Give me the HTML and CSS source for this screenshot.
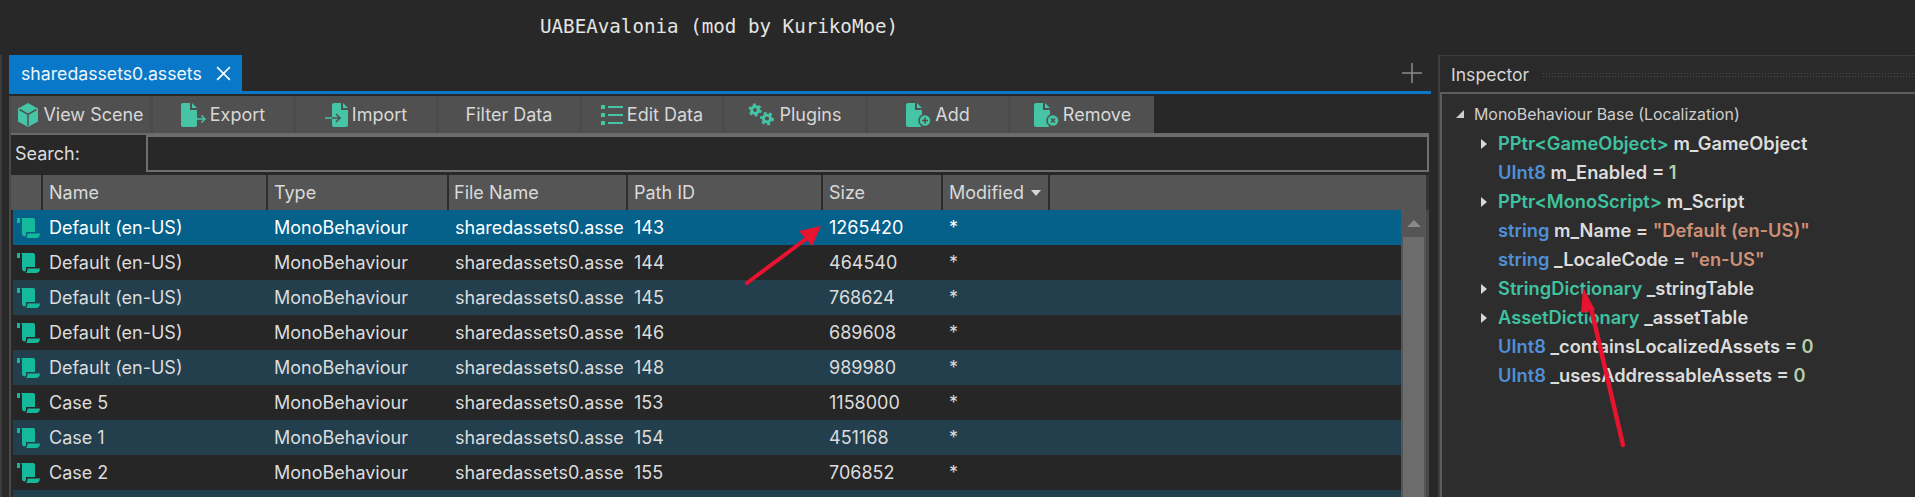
FILE: index.html
```html
<!DOCTYPE html>
<html lang="en">
<head>
  <meta charset="UTF-8">
  <meta name="viewport" content="width=device-width, initial-scale=1.0">
  <title>UABEAvalonia</title>
  <link rel="stylesheet" href="styles.css">
</head>
<body>
  <svg class="defs" width="0" height="0">
    <symbol id="scroll" viewBox="0 0 24 20">
      <path d="M1 0h3v5H1z M6 0h11a2 2 0 0 1 2 2v12h-9v3a1.500 1.500 0 0 1-1 1.400 3 3 0 0 1-3-3V2.500A3 3 0 0 0 5 0z"/>
      <path d="M11.500 15.500H24c0 2.500-1.500 4.500-4 4.500H10c1-1 1.500-2.500 1.500-4.500z"/>
    </symbol>
    <symbol id="file" viewBox="0 0 16 24">
      <path d="M2 0h7v7h7v15a2 2 0 0 1-2 2H2a2 2 0 0 1-2-2V2a2 2 0 0 1 2-2z"/>
      <path d="M11 0l5 5h-5z"/>
    </symbol>
  </svg>

  <header class="titlebar">UABEAvalonia (mod by KurikoMoe)</header>

  <div class="workspace">
    <section class="docs">
      <div class="tabstrip">
        <div class="tab">
          <span>sharedassets0.assets</span>
          <svg class="tab-close" viewBox="0 0 16 16"><path d="M2 2l12 12M14 2L2 14"/></svg>
        </div>
        <svg class="tab-add" viewBox="0 0 20 20"><path d="M10 0v20M0 10h20"/></svg>
      </div>
      <div class="tabline"></div>

      <div class="panel">
        <div class="toolbar">
          <button class="tool">
            <svg class="ico" width="22" height="24" viewBox="0 0 22 24"><path d="M11 0l10 5.500v13L11 24 1 18.500v-13z"/><path class="cut" d="M2.500 6.500l8.500 5 8.500-5M11 11.500V23"/></svg>
            View Scene
          </button>
          <button class="tool">
            <svg class="ico" width="25" height="24" viewBox="0 0 25 24"><use href="#file" width="16" height="24"/><path class="arrow" d="M15 16h9M20.500 12.500l3.500 3.500-3.500 3.500"/></svg>
            Export
          </button>
          <button class="tool">
            <svg class="ico" width="23" height="24" viewBox="0 0 23 24"><path class="arrow" d="M0 15h7"/><use href="#file" x="7" width="16" height="24"/><path class="arrow-cut" d="M7 15h8M11 11l4 4-4 4"/></svg>
            Import
          </button>
          <button class="tool">Filter Data</button>
          <button class="tool">
            <svg class="ico" width="22" height="22" viewBox="0 0 22 22"><path d="M0 1h4v4H0zM7 2h15v2H7zM0 9h4v4H0zM7 10h15v2H7zM0 17h4v4H0zM7 18h15v2H7z"/></svg>
            Edit Data
          </button>
          <button class="tool">
            <svg class="ico" width="27" height="24" viewBox="0 0 27 24">
              <circle class="gear" cx="7" cy="7" r="3.400"/><circle class="teeth" cx="7" cy="7" r="5.500"/>
              <circle class="gear" cx="19" cy="15.500" r="3.600"/><circle class="teeth" cx="19" cy="15.500" r="5.800"/>
            </svg>
            Plugins
          </button>
          <button class="tool">
            <svg class="ico" width="25" height="24" viewBox="0 0 25 24"><use href="#file" width="16" height="24"/><circle class="badge" cx="19" cy="17.500" r="6"/><path class="mark" d="M19 14.500v6M16 17.500h6"/></svg>
            Add
          </button>
          <button class="tool">
            <svg class="ico" width="25" height="24" viewBox="0 0 25 24"><use href="#file" width="16" height="24"/><circle class="badge" cx="19" cy="17.500" r="6"/><path class="mark" d="M17 15.500l4 4M21 15.500l-4 4"/></svg>
            Remove
          </button>
        </div>

        <div class="search">
          <label class="search-label" for="search">Search:</label>
          <input id="search" class="search-input" type="text">
        </div>

        <div class="table-head">
          <div class="th th-icon"></div>
          <div class="th th-name">Name</div>
          <div class="th th-type">Type</div>
          <div class="th th-file">File Name</div>
          <div class="th th-path">Path ID</div>
          <div class="th th-size">Size</div>
          <div class="th th-mod">Modified <i class="sort"></i></div>
        </div>

        <div class="table-body">
          <div class="rows" id="rows"></div>
          <div class="scrollbar">
            <div class="scroll-up"><i></i></div>
            <div class="scroll-thumb"></div>
          </div>
        </div>
      </div>
    </section>

    <section class="inspector">
      <div class="inspector-head">
        <span>Inspector</span>
        <div class="grip"></div>
      </div>
      <div class="tree">
        <div class="node root"><i class="open"></i>MonoBehaviour Base (Localization)</div>
        <div class="node"><i class="closed"></i><b class="cls">PPtr&lt;GameObject&gt;</b> m_GameObject</div>
        <div class="node"><b class="prim">UInt8</b> m_Enabled = <b class="num">1</b></div>
        <div class="node"><i class="closed"></i><b class="cls">PPtr&lt;MonoScript&gt;</b> m_Script</div>
        <div class="node"><b class="prim">string</b> m_Name = <b class="str">"Default (en-US)"</b></div>
        <div class="node"><b class="prim">string</b> _LocaleCode = <b class="str">"en-US"</b></div>
        <div class="node"><i class="closed"></i><b class="cls">StringDictionary</b> _stringTable</div>
        <div class="node"><i class="closed"></i><b class="cls">AssetDictionary</b> _assetTable</div>
        <div class="node"><b class="prim">UInt8</b> _containsLocalizedAssets = <b class="num">0</b></div>
        <div class="node"><b class="prim">UInt8</b> _usesAddressableAssets = <b class="num">0</b></div>
      </div>
    </section>
  </div>

  <svg class="markup" width="1915" height="497" viewBox="0 0 1915 497">
    <path d="M747 283L806 239" stroke="#e8132e" stroke-width="4" stroke-linecap="round"/>
    <path d="M821 226L812 246 799 231z" fill="#e8132e"/>
    <path d="M1623 445L1591 308" stroke="#e8132e" stroke-width="4.500" stroke-linecap="round"/>
    <path d="M1583 287L1595 310 1581 313z" fill="#e8132e"/>
  </svg>

  <script>
    const assets = [
      ['Default (en-US)', 143, 1265420],
      ['Default (en-US)', 144, 464540],
      ['Default (en-US)', 145, 768624],
      ['Default (en-US)', 146, 689608],
      ['Default (en-US)', 148, 989980],
      ['Case 5', 153, 1158000],
      ['Case 1', 154, 451168],
      ['Case 2', 155, 706852],
      ['', '', '']
    ];

    const rows = document.getElementById('rows');
    assets.forEach((asset, index) => {
      const row = document.createElement('div');
      row.className = 'row' + (index === 0 ? ' selected' : '') + (index % 2 === 0 && index > 0 ? ' striped' : '');
      const filled = asset[0] !== '';
      row.innerHTML = `
        <div class="td td-icon">${filled ? '<svg class="row-ico" width="24" height="20"><use href="#scroll"/></svg>' : ''}</div>
        <div class="td td-name">${asset[0]}</div>
        <div class="td td-type">${filled ? 'MonoBehaviour' : ''}</div>
        <div class="td td-file">${filled ? 'sharedassets0.asse' : ''}</div>
        <div class="td td-path">${asset[1]}</div>
        <div class="td td-size">${asset[2]}</div>
        <div class="td td-mod">${filled ? '*' : ''}</div>
      `;
      rows.appendChild(row);
    });
  </script>
</body>
</html>
```

FILE: styles.css
```css
html, body {
  margin: 0;
  height: 497px;
  overflow: hidden;
}

body {
  position: relative;
  background-color: #282828;
  color: #dcdcdc;
  font-family: Inter, "Noto Sans", sans-serif;
  font-size: 18px;
}

.defs {
  display: block;
  height: 0;
}

.titlebar {
  height: 55px;
  padding-left: 540px;
  padding-top: 16px;
  box-sizing: border-box;
  font-family: "DejaVu Sans Mono", monospace;
  font-size: 19.200px;
  line-height: 22px;
  color: #e4e4e4;
}

.workspace {
  display: flex;
  height: 442px;
  border-left: 2px solid #3c3c3c;
  box-sizing: border-box;
}

.docs {
  width: 1422px;
  margin-left: 7px;
  margin-right: 7px;
  flex: none;
  display: flex;
  flex-direction: column;
  min-height: 0;
}

.tabstrip {
  display: flex;
  align-items: stretch;
  height: 36px;
  flex: none;
}

.tab {
  width: 233px;
  background-color: #0a78c8;
  color: #eef6fc;
  display: flex;
  align-items: center;
  padding-left: 12px;
  box-sizing: border-box;
  font-size: 17.700px;
}

.tab-close {
  width: 17px;
  height: 17px;
  margin-left: 13px;
  fill: none;
  stroke: #fff;
  stroke-width: 1.500;
}

.tab-add {
  width: 20px;
  height: 20px;
  margin-left: auto;
  margin-right: 9px;
  margin-top: 8px;
  fill: none;
  stroke: #8c8c8c;
  stroke-width: 1.500;
}

.tabline {
  height: 3px;
  flex: none;
  background-color: #0a78c8;
}

.panel {
  margin-top: 2px;
  margin-right: 2px;
  border-left: 2px solid #4a4a4a;
  flex: 1;
  min-height: 0;
  display: flex;
  flex-direction: column;
}

.toolbar {
  display: flex;
  flex: none;
  height: 37px;
  border-bottom: 2px solid #6a6a6a;
}

.tool {
  width: 143px;
  flex: none;
  background-color: #505050;
  border: none;
  border-right: 3px solid #4b4b4b;
  color: #d8d8d8;
  font-family: inherit;
  font-size: 18px;
  display: flex;
  align-items: center;
  justify-content: center;
  gap: 4px;
  padding: 0;
}

.tool:first-child {
  width: 142px;
}

.tool:last-child {
  border-right: none;
}

.ico {
  fill: #45c5a5;
  flex: none;
}

.ico .cut {
  fill: none;
  stroke: #505050;
  stroke-width: 1.500;
}

.ico .arrow {
  fill: none;
  stroke: #45c5a5;
  stroke-width: 1.500;
}

.ico .arrow-cut {
  fill: none;
  stroke: #505050;
  stroke-width: 1.500;
}

.ico .badge {
  fill: #45c5a5;
  stroke: #505050;
  stroke-width: 1.500;
}

.ico .mark {
  fill: none;
  stroke: #505050;
  stroke-width: 1.500;
}

.ico .gear {
  fill: none;
  stroke: #45c5a5;
  stroke-width: 3;
}

.ico .teeth {
  fill: none;
  stroke: #45c5a5;
  stroke-width: 2.200;
  stroke-dasharray: 2.800 3;
}

.search {
  display: flex;
  flex: none;
  height: 37px;
  align-items: stretch;
}

.search-label {
  width: 135px;
  flex: none;
  padding-left: 4px;
  box-sizing: border-box;
  line-height: 37px;
}

.search-input {
  flex: 1;
  min-width: 0;
  margin: 0;
  box-sizing: border-box;
  background-color: #282828;
  border: 2px solid #6f6f6f;
  outline: none;
}

.table-head {
  display: flex;
  flex: none;
  height: 35px;
  margin-top: 3px;
  background-color: #555;
  border-right: 3px solid #333;
  line-height: 35px;
}

.th {
  box-sizing: border-box;
  padding-left: 6px;
  border-right: 2px solid #2c2c2c;
  color: #dadada;
}

.th-icon { width: 32px; }
.th-name, .td-name { width: 225px; }
.th-type, .td-type { width: 181px; }
.th-file, .td-file { width: 179px; }
.th-path, .td-path { width: 195px; }
.th-size, .td-size { width: 120px; }
.th-mod, .td-mod { width: 107px; }

.th-file, .td-file {
  padding-left: 6px;
}

.th-file {
  padding-left: 5px;
}

.th-mod {
  display: flex;
  align-items: center;
  gap: 7px;
}

.sort {
  border-left: 5px solid transparent;
  border-right: 5px solid transparent;
  border-top: 6px solid #d8d8d8;
  margin-top: 1px;
}

.table-body {
  display: flex;
  flex: 1;
  min-height: 0;
  overflow: hidden;
  border-right: 3px solid #484848;
}

.rows {
  flex: 1;
  min-width: 0;
  margin-left: 2px;
  overflow: hidden;
}

.row {
  display: flex;
  height: 35px;
  line-height: 35px;
  background-color: #262626;
}

.row.striped {
  background-color: #233f4d;
}

.row.selected {
  background-color: #05608a;
  color: #fff;
}

.td {
  box-sizing: border-box;
  padding-left: 7px;
  white-space: nowrap;
  overflow: hidden;
}

.td-icon {
  width: 29px;
  padding-left: 3px;
  display: flex;
  align-items: center;
}

.row-ico {
  fill: #14b89a;
  flex: none;
}

.scrollbar {
  width: 25px;
  flex: none;
  background-color: #555;
  display: flex;
  flex-direction: column;
  align-items: center;
}

.scroll-up {
  height: 27px;
  flex: none;
  display: flex;
  align-items: center;
  justify-content: center;
}

.scroll-up i {
  border-left: 7px solid transparent;
  border-right: 7px solid transparent;
  border-bottom: 7px solid #8a8a8a;
}

.scroll-thumb {
  width: 21px;
  flex: 1;
  background-color: #6c6c6c;
}

.inspector {
  flex: 1;
  min-width: 0;
  background-color: #2d2d2d;
  border-left: 2px solid #3d3d3d;
  border-top: 1px solid #3d3d3d;
  box-sizing: border-box;
  display: flex;
  flex-direction: column;
}

.inspector-head {
  display: flex;
  flex: none;
  align-items: center;
  height: 36px;
  padding-left: 11px;
  gap: 13px;
  font-size: 17.600px;
  background-color: #2a2a2a;
  border-bottom: 2px solid #5c5c5c;
  color: #d4d4d4;
}

.grip {
  flex: 1;
  height: 7px;
  margin-top: 2px;
  background-image: radial-gradient(#4a4a4a 0.700px, transparent 0.800px);
  background-size: 3px 3px;
}

.tree {
  flex: 1;
  border-left: 2px solid #5c5c5c;
  padding-top: 6px;
}

.node {
  position: relative;
  height: 29px;
  line-height: 29px;
  padding-left: 56px;
  font-size: 18.300px;
  font-weight: 600;
  color: #dcdcdc;
  white-space: nowrap;
}

.node b {
  font-weight: 600;
}

.node.root {
  padding-left: 32px;
  font-size: 15.900px;
  font-weight: 400;
  color: #cfcfcf;
}

.cls { color: #3fc2a0; }
.prim { color: #4f8fd8; }
.num { color: #b5cea8; }
.str { color: #ce9178; }

.open {
  position: absolute;
  left: 14px;
  top: 10px;
  border-left: 8px solid transparent;
  border-bottom: 8px solid #cfcfcf;
}

.closed {
  position: absolute;
  left: 39px;
  top: 10px;
  border-top: 5px solid transparent;
  border-bottom: 5px solid transparent;
  border-left: 6px solid #d8d8d8;
}

.markup {
  position: absolute;
  left: 0;
  top: 0;
  pointer-events: none;
}
```
